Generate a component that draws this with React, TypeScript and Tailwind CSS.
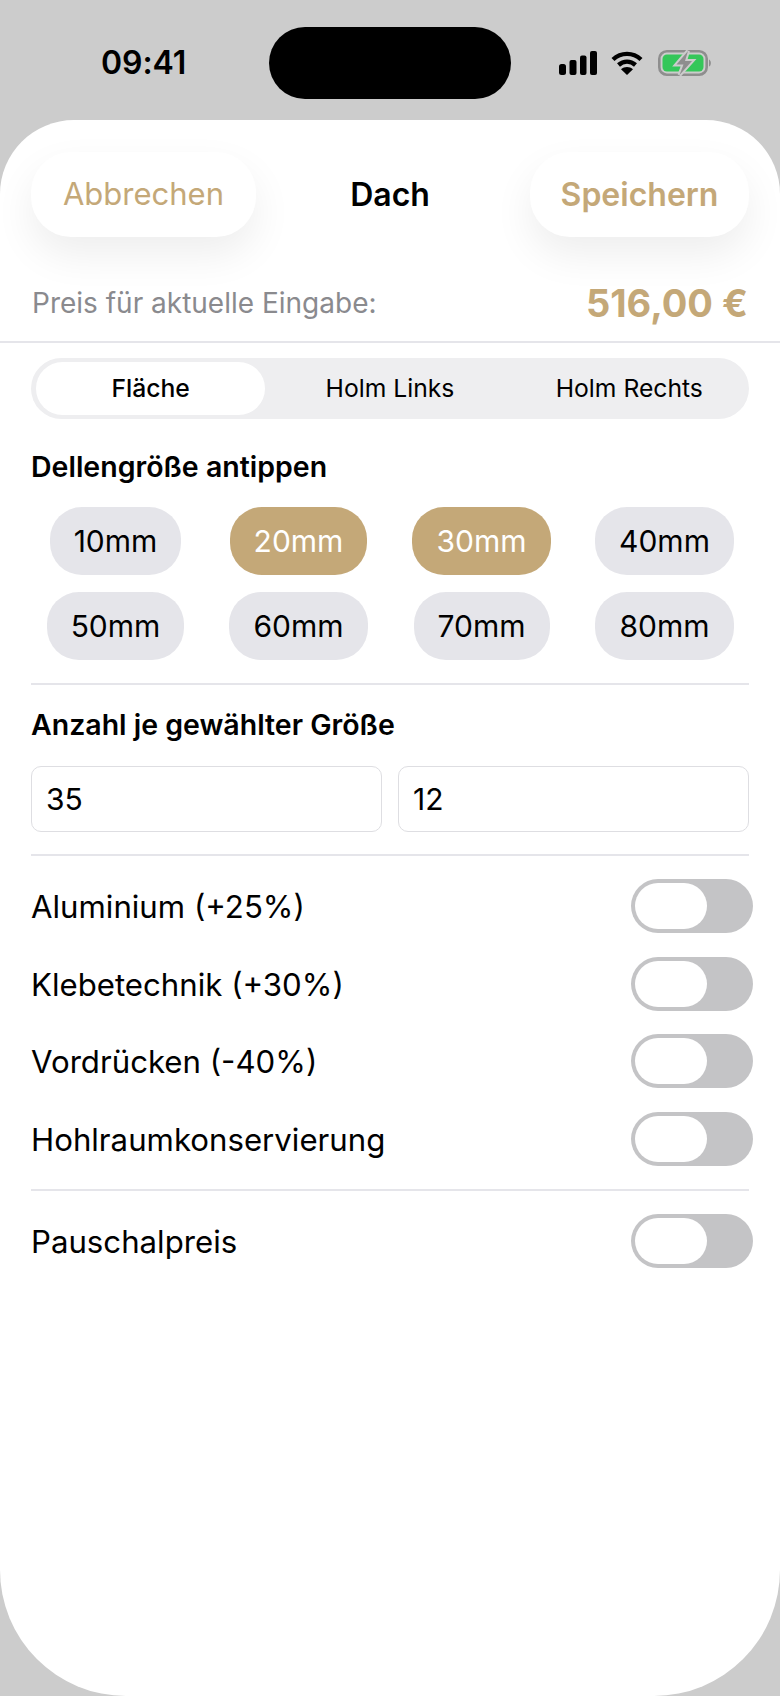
import { useState } from 'react';

const sizes = ['10mm', '20mm', '30mm', '40mm', '50mm', '60mm', '70mm', '80mm'];
const options = ['Aluminium (+25%)', 'Klebetechnik (+30%)', 'Vordrücken (-40%)', 'Hohlraumkonservierung'];

function Toggle() {
  return (
    <div className="w-[122px] h-[54px] -mr-[4px] rounded-full bg-[#c4c4c6] p-[4px] flex justify-start">
      <div className="w-[72px] h-[46px] rounded-full bg-white" />
    </div>
  );
}

function StatusIcons() {
  return (
    <div className="flex items-center gap-[14px]">
      <svg width="38" height="24" viewBox="0 0 38 24" fill="#000">
        <rect x="0" y="13" width="7" height="11" rx="2.5" />
        <rect x="10.5" y="9" width="7" height="15" rx="2" />
        <rect x="21" y="4.5" width="6.5" height="19.5" rx="2" />
        <rect x="31" y="0" width="7" height="24" rx="2" />
      </svg>
      <svg width="32" height="24" viewBox="0 0 32 24" fill="none" stroke="#000" strokeWidth="4.4">
        <path d="M2 8.5 C 10 1, 22 1, 30 8.5" />
        <path d="M7.5 14 C 12.5 9.5, 19.5 9.5, 24.5 14" />
        <path d="M16 24 L10 18.2 C 13.5 15.4, 18.5 15.4, 22 18.2 Z" fill="#000" stroke="none" />
      </svg>
      <svg className="ml-[1px]" width="55" height="26" viewBox="0 0 55 26" fill="none">
        <rect x="1.3" y="1.3" width="47.4" height="23.4" rx="7.5" stroke="#8e8e8e" strokeWidth="2.6" />
        <rect x="4.5" y="4.5" width="41" height="17" rx="4.5" fill="#34c759" />
        <path d="M51 9.5 C53.5 10.5 53.5 15.5 51 16.5 Z" fill="#8e8e8e" />
        <path d="M30 1 L18.5 14.5 H25.5 L21.5 25 L34 11 H27 Z" fill="#cccccc" stroke="#cccccc" strokeWidth="4" />
        <path d="M30 1 L18.5 14.5 H25.5 L21.5 25 L34 11 H27 Z" fill="#8e8e8e" />
      </svg>
    </div>
  );
}

export default function App() {
  const [selected] = useState(['20mm', '30mm']);

  return (
    <div className="w-[780px] h-[1696px] bg-[#cccccc] flex flex-col overflow-hidden text-black font-['Inter',sans-serif]">
      {/* Status bar */}
      <div className="h-[120px] shrink-0 flex items-start pt-[27px]">
        <div className="w-[269px] h-[72px] flex items-center pl-[101px]">
          <span className="text-[32px] font-semibold leading-none tracking-[-0.1px]">09:41</span>
        </div>
        <div className="w-[242px] h-[72px] rounded-[36px] bg-black" />
        <div className="h-[72px] flex items-center pl-[48px]">
          <StatusIcons />
        </div>
      </div>

      {/* Sheet */}
      <div className="flex-1 bg-white rounded-t-[74px] rounded-b-[126px] flex flex-col">
        <div className="grid grid-cols-[1fr_auto_1fr] items-center px-[31px] pt-[32px]">
          <button className="justify-self-start w-[225px] h-[85px] rounded-[40px] bg-white text-[#c4a878] text-[31px] shadow-[0_18px_40px_rgba(0,0,0,0.07)]">
            Abbrechen
          </button>
          <h1 className="text-[32px] font-semibold">Dach</h1>
          <button className="justify-self-end w-[219px] h-[85px] rounded-[40px] bg-white text-[#c4a878] text-[32px] font-semibold shadow-[0_18px_40px_rgba(0,0,0,0.07)]">
            Speichern
          </button>
        </div>

        <div className="h-[52px] mt-[40px] mb-[12px] px-[32px] flex items-center justify-between">
          <span className="text-[28px] text-[#8a8a8e]">Preis für aktuelle Eingabe:</span>
          <span className="text-[38px] font-bold text-[#c4a878]">516,00 €</span>
        </div>
        <div className="h-[2px] bg-[#e5e5ea]" />

        <div className="px-[31px] flex flex-col">
          {/* Tabs */}
          <div className="mt-[15px] h-[61px] rounded-full bg-[#eeeef0] grid grid-cols-3 items-center text-[24.7px]">
            <div className="h-[53px] mx-[5px] rounded-full bg-white flex items-center justify-center font-medium">Fläche</div>
            <div className="text-center">Holm Links</div>
            <div className="text-center">Holm Rechts</div>
          </div>

          <h2 className="mt-[32px] text-[28.5px] leading-[32px] font-semibold">Dellengröße antippen</h2>
          <div className="mt-[24px] -mx-[7px] grid grid-cols-4 gap-y-[17px] justify-items-center">
            {sizes.map((s) => (
              <div
                key={s}
                className={`h-[68px] px-[24px] rounded-[32px] flex items-center text-[30px] ${
                  selected.includes(s) ? 'bg-[#c4a878] text-white' : 'bg-[#e5e5ea] text-black'
                }`}
              >
                {s}
              </div>
            ))}
          </div>
          <div className="mt-[23px] h-[2px] bg-[#e5e5ea]" />

          <h2 className="mt-[24px] text-[28.5px] leading-[32px] font-semibold">Anzahl je gewählter Größe</h2>
          <div className="mt-[25px] grid grid-cols-2 gap-[16px]">
            <div className="h-[66px] rounded-[10px] border border-[#dedee2] flex items-center pl-[14px] pt-[1px] text-[30px]">35</div>
            <div className="h-[66px] rounded-[10px] border border-[#dedee2] flex items-center pl-[14px] pt-[1px] text-[30px]">12</div>
          </div>
          <div className="mt-[22px] h-[2px] bg-[#e5e5ea]" />

          <div className="mt-[23px] flex flex-col gap-[23.7px]">
            {options.map((o) => (
              <div key={o} className="h-[54px] flex items-center justify-between">
                <span className="text-[31.2px] pt-[3px]">{o}</span>
                <Toggle />
              </div>
            ))}
          </div>
          <div className="mt-[23px] h-[2px] bg-[#e5e5ea]" />
          <div className="mt-[23px] h-[54px] flex items-center justify-between">
            <span className="text-[31.2px] pt-[2px]">Pauschalpreis</span>
            <Toggle />
          </div>
        </div>
      </div>
    </div>
  );
}
